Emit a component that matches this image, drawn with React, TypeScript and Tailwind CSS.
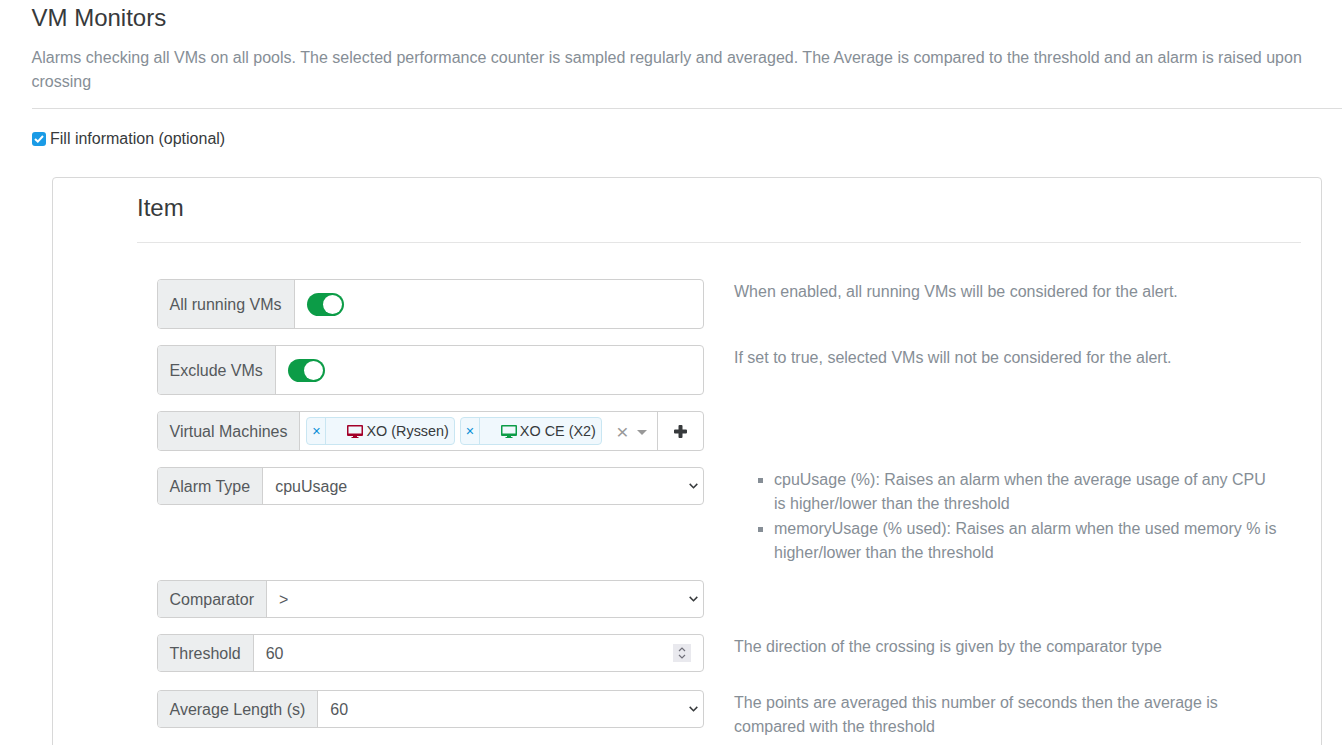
import { ReactNode } from "react";

const Addon = ({ children }: { children: ReactNode }) => (
    <span className="flex items-center bg-[#eceeef] border-r border-[#d0d0d0] px-3 pt-px text-[#55595c] whitespace-nowrap">
        {children}
    </span>
);

const Group = ({ className, children }: { className: string; children: ReactNode }) => (
    <div className={`flex w-[547px] shrink-0 border border-[#d0d0d0] rounded overflow-hidden ${className}`}>
        {children}
    </div>
);

const Toggle = () => (
    <div className="flex items-center pl-3 flex-1">
        <div className="flex justify-end items-center w-[37px] h-[23px] rounded-full bg-[#0c9c47] pr-[2px]">
            <div className="w-[19px] h-[19px] rounded-full bg-white" />
        </div>
    </div>
);

const Select = ({ value }: { value: string }) => (
    <div className="flex items-center flex-1 min-w-0 pr-[5px]">
        <select
            defaultValue={value}
            className="flex-1 min-w-0 appearance-none bg-white pl-3 pt-px text-[#55595c] outline-none"
        >
            <option value={value}>{value}</option>
        </select>
        <svg width="9" height="6" viewBox="0 0 9 6" fill="none" stroke="#373a3c" strokeWidth="1.5">
            <path d="M0.7 0.9l3.8 3.8 3.8-3.8" />
        </svg>
    </div>
);

const MonitorIcon = ({ color }: { color: string }) => (
    <svg width="16" height="13" viewBox="0 0 16 13" fill={color} className="shrink-0">
        <path fillRule="evenodd" d="M1 0h14a1 1 0 011 1v9a1 1 0 01-1 1H1a1 1 0 01-1-1V1a1 1 0 011-1zm.5 1.5V8.5h13V1.5z" />
        <path d="M6 11h4v1h1.5v1h-7v-1H6z" />
    </svg>
);

const Tag = ({ color, label }: { color: string; label: string }) => (
    <div className="flex items-center h-[28px] border border-[#c9e6f2] rounded-sm bg-[#f0f8fd] text-[14.4px] leading-none">
        <span className="flex items-center justify-center w-[19px] h-full border-r border-[#c9e6f2] text-[#0a8fd8]">×</span>
        <span className="flex items-center gap-[3px] pl-[21px] pr-[5px] text-[#373a3c]">
            <MonitorIcon color={color} />
            {label}
        </span>
    </div>
);

const Help = ({ children }: { children: ReactNode }) => (
    <div className="text-[#868e96] leading-6 pt-px">{children}</div>
);

const App = () => {
    return (
        <div className="h-[745px] overflow-hidden bg-white pl-[31.5px] font-['Liberation_Sans',sans-serif] text-base text-[#373a3c]">
            <h3 className="text-[24px] leading-[29px] pt-[3px] mb-[14px]">VM Monitors</h3>
            <p className="text-[#868e96] leading-6 pr-[31px] tracking-[0.012px]">
                Alarms checking all VMs on all pools. The selected performance counter is sampled regularly and averaged. The Average is compared to the threshold and an alarm is raised upon crossing
            </p>
            <hr className="border-[#dddddd] mt-[14px] mb-[18px]" />

            <label className="flex items-center h-6 gap-[4px]">
                <span className="flex items-center justify-center w-[14px] h-[14px] ml-[0.5px] -mt-px rounded-[3px] bg-[#1a9be6]">
                    <svg width="10" height="8" viewBox="0 0 10 8" fill="none" stroke="white" strokeWidth="2">
                        <path d="M1 4l2.8 2.6L9 1" />
                    </svg>
                </span>
                <span>Fill information (optional)</span>
            </label>

            {/* Item card */}
            <div className="ml-[20.5px] mr-[20px] mt-[26px] border border-[#d8d8d8] rounded pl-[84px] pr-5 pt-[15px] pb-10">
                <h3 className="text-[24px] leading-[29px] mb-[20px]">Item</h3>
                <hr className="border-[#e5e5e5] mb-[36px]" />

                <div className="flex flex-col pl-[19.5px]">
                    <div className="flex gap-[30.5px] mb-4">
                        <Group className="h-[50px]">
                            <Addon>All running VMs</Addon>
                            <Toggle />
                        </Group>
                        <Help>When enabled, all running VMs will be considered for the alert.</Help>
                    </div>

                    <div className="flex gap-[30.5px] mb-4">
                        <Group className="h-[50px]">
                            <Addon>Exclude VMs</Addon>
                            <Toggle />
                        </Group>
                        <Help>If set to true, selected VMs will not be considered for the alert.</Help>
                    </div>

                    <div className="flex gap-[30.5px] mb-4">
                        <Group className="h-10">
                            <Addon>Virtual Machines</Addon>
                            <div className="flex items-center flex-1 pl-[6px] gap-[5px]">
                                <Tag color="#a30029" label="XO (Ryssen)" />
                                <Tag color="#0c9c47" label="XO CE (X2)" />
                                <span className="ml-auto text-[21px] leading-none text-[#999]">×</span>
                                <span className="ml-[3px] mr-[10px] mt-[2px] border-x-[5px] border-x-transparent border-t-[5px] border-t-[#999]" />
                            </div>
                            <button className="flex items-center justify-center w-[46px] border-l border-[#d0d0d0]">
                                <svg width="13" height="13" viewBox="0 0 13 13" fill="#373a3c">
                                    <path d="M4.5 1a1 1 0 011-1h2a1 1 0 011 1v3.5H12a1 1 0 011 1v2a1 1 0 01-1 1H8.500V12a1 1 0 01-1 1h-2a1 1 0 01-1-1V8.500H1a1 1 0 01-1-1v-2a1 1 0 011-1h3.500z" />
                                </svg>
                            </button>
                        </Group>
                    </div>

                    <div className="flex gap-[30.5px] mb-[15px]">
                        <Group className="h-[38px]">
                            <Addon>Alarm Type</Addon>
                            <Select value="cpuUsage" />
                        </Group>
                        <ul className="list-[square] pl-10 pt-px w-[544px] text-[#868e96] leading-6">
                            <li>cpuUsage (%): Raises an alarm when the average usage of any CPU is higher/lower than the threshold</li>
                            <li className="mt-px">memoryUsage (% used): Raises an alarm when the used memory % is higher/lower than the threshold</li>
                        </ul>
                    </div>

                    <div className="flex gap-[30.5px] mb-4">
                        <Group className="h-[38px]">
                            <Addon>Comparator</Addon>
                            <Select value=">" />
                        </Group>
                    </div>

                    <div className="flex gap-[30.5px] mb-[18px]">
                        <Group className="h-[38px]">
                            <Addon>Threshold</Addon>
                            <div className="flex items-center flex-1 pl-3 pr-3 text-[#55595c]">
                                <input readOnly value="60" className="flex-1 min-w-0 pt-px outline-none" />
                                <span className="flex items-center justify-center w-[18px] h-[18px] bg-[#e9e9ee]">
                                    <svg width="10" height="14" viewBox="0 0 10 14" fill="none" stroke="#70707a" strokeWidth="1.2">
                                        <path d="M2 5l3-3 3 3" />
                                        <path d="M2 9l3 3 3-3" />
                                    </svg>
                                </span>
                            </div>
                        </Group>
                        <Help>The direction of the crossing is given by the comparator type</Help>
                    </div>

                    <div className="flex gap-[30.5px] mb-4">
                        <Group className="h-[38px]">
                            <Addon>Average Length (s)</Addon>
                            <Select value="60" />
                        </Group>
                        <div className="w-[500px]">
                            <Help>The points are averaged this number of seconds then the average is compared with the threshold</Help>
                        </div>
                    </div>
                </div>
            </div>
        </div>
    );
};

export default App;
